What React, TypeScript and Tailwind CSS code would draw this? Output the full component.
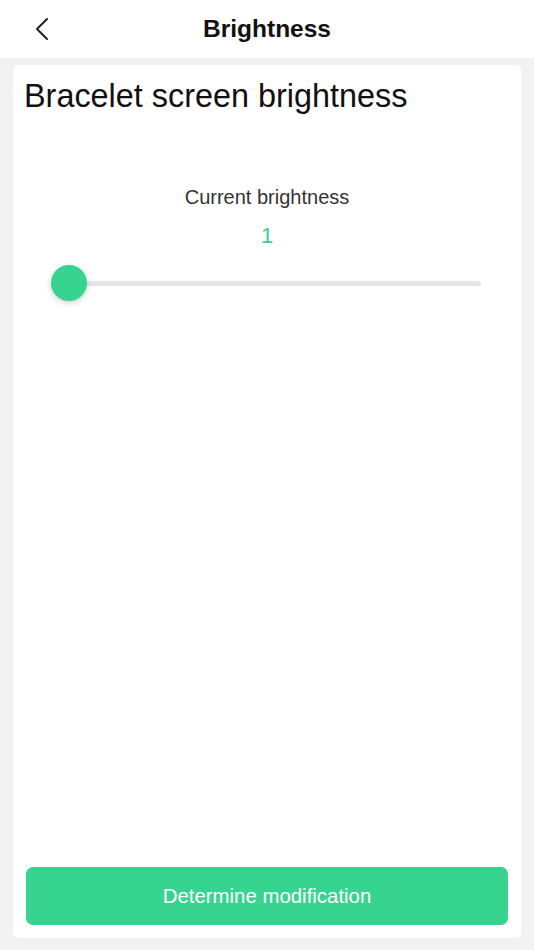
import React from 'react';

const App: React.FC = () => {
  return (
    <div className="w-[534px] h-[950px] bg-[#f2f2f2] flex flex-col" style={{ fontFamily: '"Liberation Sans", Arial, sans-serif' }}>
      {/* header */}
      <div className="h-[58px] bg-white relative flex items-center justify-center shrink-0">
        <button className="absolute left-[30px] top-[14px] w-[24px] h-[30px] flex items-center justify-center">
          <svg width="14" height="24" viewBox="0 0 14 24" fill="none">
            <path d="M12 2 L2 12 L12 22" stroke="#222" strokeWidth="2" strokeLinecap="round" strokeLinejoin="round" />
          </svg>
        </button>
        <h1 className="text-[24.5px] font-bold text-[#111]">Brightness</h1>
      </div>

      {/* card */}
      <div className="flex-1 mx-[13px] mt-[7px] mb-[12px] bg-white rounded-[5px] flex flex-col">
        <div className="pl-[11px] pt-[11px] text-[32.4px] leading-[40px] text-[#111]">Bracelet screen brightness</div>

        <div className="mt-[69px] text-center text-[20px] leading-[24px] text-[#333]">Current brightness</div>
        <div className="mt-[15px] text-center text-[22px] leading-[24px] text-[#36d48f]">1</div>

        <div className="mt-[17px] ml-[38px] mr-[40px] relative h-[36px] flex items-center">
          <div className="w-full h-[5px] rounded-full bg-[#e6e6e8]" />
          <div className="absolute left-0 top-0 w-[36px] h-[36px] rounded-full bg-[#36d48f] shadow-[0_2px_6px_rgba(0,0,0,0.18)]" />
        </div>

        <div className="flex-1" />

        <button className="mx-[13px] mb-[13px] h-[58px] rounded-[7px] bg-[#36d48f] text-white text-[20.4px]">
          Determine modification
        </button>
      </div>
    </div>
  );
};

export default App;
